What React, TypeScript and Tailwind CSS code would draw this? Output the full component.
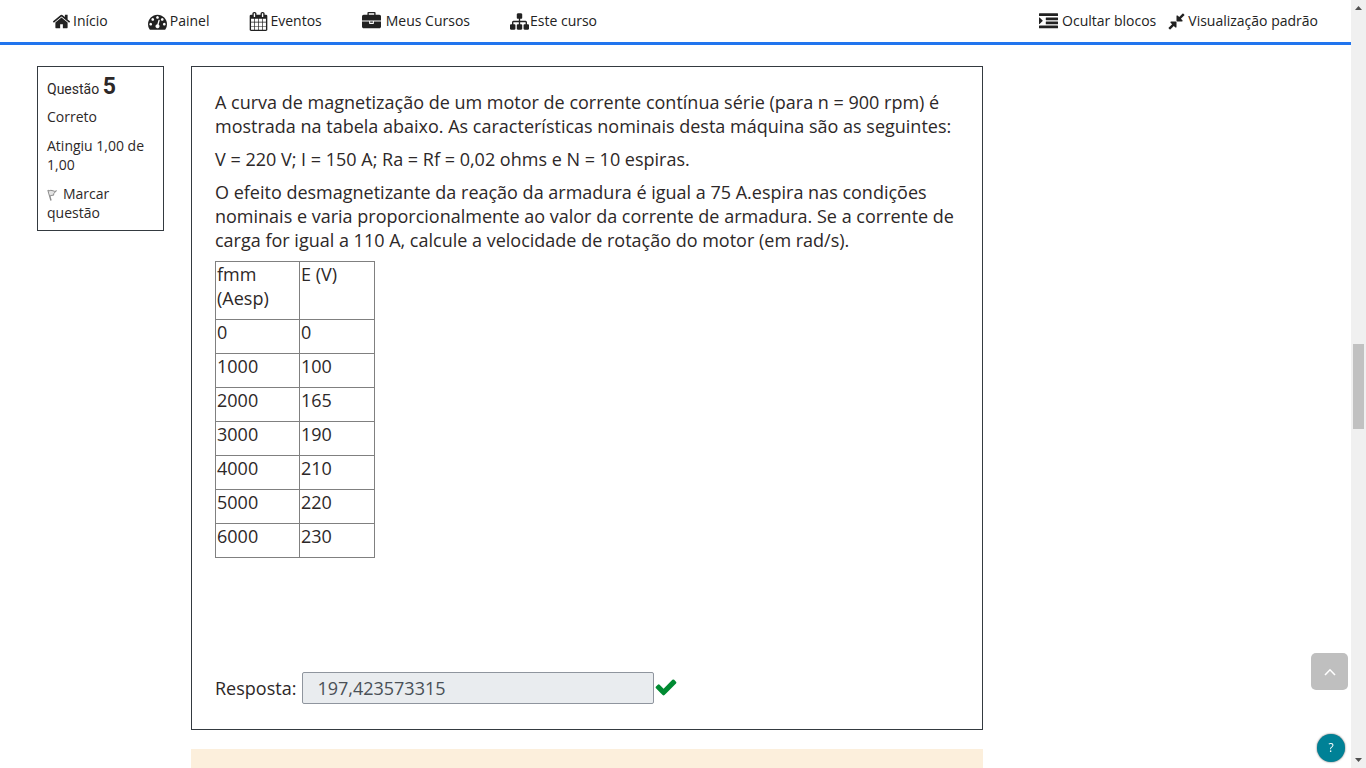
import React from "react";

const ICONS = {
  home: "M1472 992v480q0 26-19 45t-45 19h-384v-384h-256v384h-384q-26 0-45-19t-19-45v-480q0-1 .5-3t.5-3l575-474 575 474q1 2 1 6zm223-69l-62 74q-8 9-21 11h-3q-13 0-21-7l-692-577-692 577q-12 8-24 7-13-2-21-11l-62-74q-8-10-7-23.5t11-21.5l719-599q32-26 76-26t76 26l244 204v-195q0-14 9-23t23-9h192q14 0 23 9t9 23v408l219 182q10 8 11 21.5t-7 23.5z",
  dashboard:
    "M384 1152q0-53-37.5-90.5t-90.5-37.5-90.5 37.5-37.5 90.5 37.5 90.5 90.5 37.5 90.5-37.5 37.5-90.5zm192-448q0-53-37.5-90.5t-90.5-37.5-90.5 37.5-37.5 90.5 37.5 90.5 90.5 37.5 90.5-37.5 37.5-90.5zm428 481l101-382q6-26-7.5-48.5t-38.5-29.5-48 6.5-30 39.5l-101 382q-60 5-107 43.5t-63 98.5q-20 77 20 146t117 89 146-20 89-117q16-60-6-117t-72-91zm660-33q0-53-37.5-90.5t-90.5-37.5-90.5 37.5-37.5 90.5 37.5 90.5 90.5 37.5 90.5-37.5 37.5-90.5zm-640-640q0-53-37.5-90.5t-90.5-37.5-90.5 37.5-37.5 90.5 37.5 90.5 90.5 37.5 90.5-37.5 37.5-90.5zm448 192q0-53-37.5-90.5t-90.5-37.5-90.5 37.5-37.5 90.5 37.5 90.5 90.5 37.5 90.5-37.5 37.5-90.5zm320 448q0 261-141 483-19 29-54 29h-1402q-35 0-54-29-141-221-141-483 0-182 71-348t191-286 286-191 348-71 348 71 286 191 191 286 71 348z",
  calendar:
    "M192 1664h288v-288h-288v288zm352 0h320v-288h-320v288zm-352-352h288v-320h-288v320zm352 0h320v-320h-320v320zm-352-384h288v-288h-288v288zm736 736h320v-288h-320v288zm-384-736h320v-288h-320v288zm768 736h288v-288h-288v288zm-384-352h320v-320h-320v320zm-352-864v-288q0-13-9.5-22.5t-22.5-9.5h-64q-13 0-22.5 9.5t-9.5 22.5v288q0 13 9.5 22.5t22.5 9.5h64q13 0 22.5-9.5t9.5-22.5zm736 864h288v-320h-288v320zm-384-384h320v-288h-320v288zm384 0h288v-288h-288v288zm32-480v-288q0-13-9.5-22.5t-22.5-9.5h-64q-13 0-22.5 9.5t-9.5 22.5v288q0 13 9.5 22.5t22.5 9.5h64q13 0 22.5-9.5t9.5-22.5zm384-64v1280q0 52-38 90t-90 38h-1408q-52 0-90-38t-38-90v-1280q0-52 38-90t90-38h128v-96q0-66 47-113t113-47h64q66 0 113 47t47 113v96h384v-96q0-66 47-113t113-47h64q66 0 113 47t47 113v96h128q52 0 90 38t38 90z",
  briefcase:
    "M640 256h512v-128h-512v128zm1152 640v480q0 66-47 113t-113 47h-1472q-66 0-113-47t-47-113v-480h672v160q0 26 19 45t45 19h320q26 0 45-19t19-45v-160h672zm-768 0v128h-256v-128h256zm768-480v384h-1792v-384q0-66 47-113t113-47h352v-160q0-40 28-68t68-28h576q40 0 68 28t28 68v160h352q66 0 113 47t47 113z",
  sitemap:
    "M1792 1248v320q0 40-28 68t-68 28h-320q-40 0-68-28t-28-68v-320q0-40 28-68t68-28h96v-192h-512v192h96q40 0 68 28t28 68v320q0 40-28 68t-68 28h-320q-40 0-68-28t-28-68v-320q0-40 28-68t68-28h96v-192h-512v192h96q40 0 68 28t28 68v320q0 40-28 68t-68 28h-320q-40 0-68-28t-28-68v-320q0-40 28-68t68-28h96v-192q0-52 38-90t90-38h512v-192h-96q-40 0-68-28t-28-68v-320q0-40 28-68t68-28h320q40 0 68 28t28 68v320q0 40-28 68t-68 28h-96v192h512q52 0 90 38t38 90v192h96q40 0 68 28t28 68z",
  indent:
    "M352 832q0 14-9 23l-288 288q-9 9-23 9-13 0-22.5-9.5t-9.5-22.5v-576q0-13 9.5-22.5t22.5-9.5q14 0 23 9l288 288q9 9 9 23zM32 1280h1728q32 0 32 32v192q0 32-32 32h-1728q-32 0-32-32v-192q0-32 32-32zM672 896h1088q32 0 32 32v192q0 32-32 32h-1088q-32 0-32-32v-192q0-32 32-32zM672 512h1088q32 0 32 32v192q0 32-32 32h-1088q-32 0-32-32v-192q0-32 32-32zM32 128h1728q32 0 32 32v192q0 32-32 32h-1728q-32 0-32-32v-192q0-32 32-32z",
  compress:
    "M896 960v448q0 26-19 45t-45 19-45-19l-144-144-332 332q-10 10-23 10t-23-10l-114-114q-10-10-10-23t10-23l332-332-144-144q-19-19-19-45t19-45 45-19h448q26 0 45 19t19 45zm755-672q0 13-10 23l-332 332 144 144q19 19 19 45t-19 45-45 19h-448q-26 0-45-19t-19-45v-448q0-26 19-45t45-19 45 19l144 144 332-332q10-10 23-10t23 10l114 114q10 10 10 23z",
  check:
    "M1671 566q0 40-28 68l-724 724-136 136q-28 28-68 28t-68-28l-136-136-362-362q-28-28-28-68t28-68l136-136q28-28 68-28t68 28l294 295 656-657q28-28 68-28t68 28l136 136q28 28 28 68z",
};

function Icon({ name, className = "size-[19px]" }: { name: keyof typeof ICONS; className?: string }) {
  return (
    <svg viewBox="0 0 1792 1792" fill="currentColor" aria-hidden="true" className={`shrink-0 ${className}`}>
      <path d={ICONS[name]} />
    </svg>
  );
}

function NavLink({ icon, gap = "gap-1", children }: { icon: keyof typeof ICONS; gap?: string; children: React.ReactNode }) {
  return (
    <a href="#" className={`flex items-center whitespace-nowrap ${gap}`}>
      <Icon name={icon} />
      <span>{children}</span>
    </a>
  );
}

const ROWS = [
  ["0", "0"],
  ["1000", "100"],
  ["2000", "165"],
  ["3000", "190"],
  ["4000", "210"],
  ["5000", "220"],
  ["6000", "230"],
];

export default function App() {
  return (
    <div className="flex h-screen overflow-hidden bg-white font-['Open_Sans','Noto_Sans',sans-serif] text-[#2d2828]">
      <div className="flex min-w-0 flex-1 flex-col">
        <header className="flex h-[45px] shrink-0 items-center justify-between border-b-3 border-[#2175ee] pr-[33px] pl-[52px] text-sm text-[#222]">
          <nav className="flex items-center gap-10">
            <NavLink icon="home" gap="gap-0.5">Início</NavLink>
            <NavLink icon="dashboard" gap="gap-[3px]">Painel</NavLink>
            <NavLink icon="calendar" gap="gap-0.5">Eventos</NavLink>
            <NavLink icon="briefcase" gap="gap-[5px]">Meus Cursos</NavLink>
            <NavLink icon="sitemap" gap="gap-px">Este curso</NavLink>
          </nav>
          <div className="flex items-center gap-[11px]">
            <NavLink icon="indent">Ocultar blocos</NavLink>
            <NavLink icon="compress" gap="gap-0.5">Visualização padrão</NavLink>
          </div>
        </header>

        <main className="flex items-start gap-[27px] pt-[21px] pr-[368px] pl-[37px]">
          <aside className="flex w-[127px] shrink-0 flex-col gap-[10px] border border-[#343a40] px-[9px] pt-3 pb-2 text-sm leading-[19px]">
            <h3 className="font-[Roboto,sans-serif] leading-4">
              Questão <span className="text-[23px] font-bold">5</span>
            </h3>
            <div>Correto</div>
            <div>Atingiu 1,00 de 1,00</div>
            <a href="#">
              <svg viewBox="0 0 12 12" className="mr-1 inline size-3" fill="none" stroke="#8a8a8a" aria-hidden="true">
                <path d="M1 1 L4 11.5" strokeWidth="1.4" />
                <path d="M1.5 2 Q4 .7 6 1.8 T9.5 1.8 L6.8 4.4 L6.6 6.2 Q5 6 3 7" fill="#e4e4e4" />
              </svg>
              Marcar questão
            </a>
          </aside>

          <div className="min-w-0 flex-1">
            <section className="flex h-[664px] flex-col justify-between border border-[#343a40] px-[23px] pt-[23px] pb-[25px] text-lg leading-6">
              <div>
                <div className="flex flex-col gap-[9px]">
                  <p>
                    A curva de magnetização de um motor de corrente contínua série (para n = 900 rpm) é mostrada na
                    tabela abaixo. As características nominais desta máquina são as seguintes:
                  </p>
                  <p>V = 220 V; I = 150 A; Ra = Rf = 0,02 ohms e N = 10 espiras.</p>
                  <p>
                    O efeito desmagnetizante da reação da armadura é igual a 75 A.espira nas condições nominais e varia
                    proporcionalmente ao valor da corrente de armadura. Se a corrente de carga for igual a 110 A,
                    calcule a velocidade de rotação do motor (em rad/s).
                  </p>
                </div>
                <table className="mt-[9px] w-40 table-fixed border-collapse text-left">
                  <thead>
                    <tr>
                      <th className="w-[84px] border border-[gray] px-px pb-[9px] align-top font-normal">fmm (Aesp)</th>
                      <th className="border border-[gray] px-px pb-[9px] align-top font-normal">E (V)</th>
                    </tr>
                  </thead>
                  <tbody>
                    {ROWS.map(([fmm, e]) => (
                      <tr key={fmm}>
                        <td className="border border-[gray] px-px pb-[9px]">{fmm}</td>
                        <td className="border border-[gray] px-px pb-[9px]">{e}</td>
                      </tr>
                    ))}
                  </tbody>
                </table>
              </div>
              <div className="flex items-center">
                <label htmlFor="resposta" className="mr-1.5">Resposta:</label>
                <input
                  id="resposta"
                  type="text"
                  readOnly
                  value="197,423573315"
                  className="h-8 w-[352px] rounded-xs border border-[#8f959e] bg-[#e9ecef] px-[14px] text-[#495057]"
                />
                <Icon name="check" className="mb-0.5 size-6 text-[#008a32]" />
              </div>
            </section>
            <div className="mt-[19px] h-24 bg-[#fcefdc]" />
          </div>
        </main>
      </div>

      <button
        type="button"
        aria-label="Voltar ao topo"
        className="fixed right-[18px] bottom-[78px] flex size-[37px] items-center justify-center rounded-[5px] bg-[#bfbfbf] text-white"
      >
        <svg viewBox="0 0 12 8" className="h-2 w-3" fill="none" stroke="currentColor" strokeWidth="1.6" aria-hidden="true">
          <path d="M1 7 L6 1.8 L11 7" />
        </svg>
      </button>
      <button
        type="button"
        className="fixed right-[21px] bottom-[6px] flex size-7 items-center justify-center rounded-full bg-[#008196] text-xs text-white shadow-[0_0_2px_#555]"
      >
        ?
      </button>

      <div className="flex w-[15px] shrink-0 flex-col items-center justify-between bg-[#f0f0f0] py-1.5" aria-hidden="true">
        <svg viewBox="0 0 7 4" className="h-1 w-[7px]" fill="#505050">
          <path d="M0 4 L3.5 0 L7 4z" />
        </svg>
        <div className="mt-1 h-[85px] w-[11px] bg-[#c1c1c1]" />
        <svg viewBox="0 0 7 4" className="h-1 w-[7px]" fill="#505050">
          <path d="M0 0 L3.5 4 L7 0z" />
        </svg>
      </div>
    </div>
  );
}
